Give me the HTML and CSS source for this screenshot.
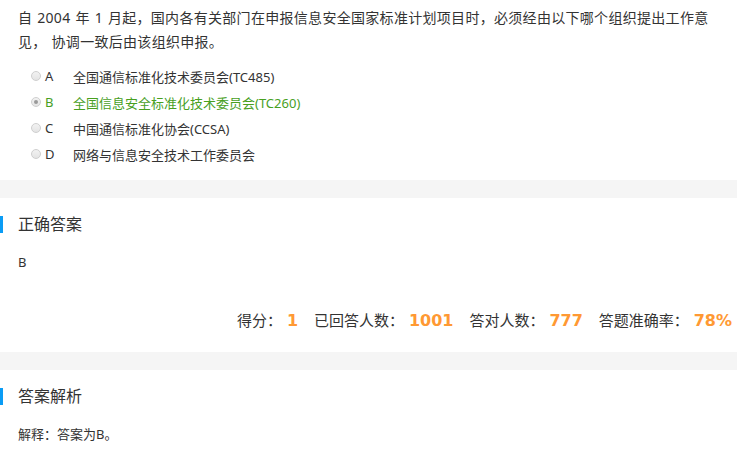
FILE: index.html
```html
<!DOCTYPE html>
<html lang="zh-CN">
<head>
    <meta charset="UTF-8">
    <title>题目详情</title>
    <link rel="stylesheet" href="styles.css">
</head>
<body>
    <div class="question-box">
        <p class="question">自 2004 年 1 月起，国内各有关部门在申报信息安全国家标准计划项目时，必须经由以下哪个组织提出工作意见， 协调一致后由该组织申报。</p>
        <ul class="choices">
            <li><span class="radio"></span><span class="letter">A</span>全国通信标准化技术委员会(TC485)</li>
            <li class="right"><span class="radio checked"></span><span class="letter">B</span>全国信息安全标准化技术委员会(TC260)</li>
            <li><span class="radio"></span><span class="letter">C</span>中国通信标准化协会(CCSA)</li>
            <li><span class="radio"></span><span class="letter">D</span>网络与信息安全技术工作委员会</li>
        </ul>
    </div>

    <div class="band"></div>

    <div class="section">
        <h2 class="section-title">正确答案</h2>
        <p class="section-text">B</p>
        <p class="stats">
            得分：<b>1</b>
            已回答人数：<b>1001</b>
            答对人数：<b>777</b>
            答题准确率：<b class="last">78%</b>
        </p>
    </div>

    <div class="band"></div>

    <div class="section">
        <h2 class="section-title">答案解析</h2>
        <p class="section-text">解释：答案为B。</p>
    </div>
</body>
</html>
```

FILE: styles.css
```css
body {
    margin: 0;
    font-family: "Noto Sans", "Noto Sans CJK SC", sans-serif;
    color: #333;
    background-color: #fff;
}

p, h2, ul {
    margin: 0;
}

.question {
    padding: 6px 18px 0 18px;
    font-size: 14px;
    line-height: 24px;
    letter-spacing: 0.3px;
    word-spacing: 1px;
}

.choices {
    list-style-type: none;
    padding: 0;
    margin: 9px 0 13px;
    font-size: 13px;
}

.choices li {
    display: flex;
    align-items: center;
    height: 26px;
}

.choices li.right {
    color: #48a01f;
}

.radio {
    box-sizing: border-box;
    width: 10px;
    height: 10px;
    margin-left: 31px;
    border: 1px solid #cfcfcf;
    border-radius: 50%;
    background: linear-gradient(#f2f2f2, #e4e4e4);
    display: flex;
    align-items: center;
    justify-content: center;
}

.radio.checked::after {
    content: "";
    width: 4px;
    height: 4px;
    border-radius: 50%;
    background-color: #9a9a9a;
}

.letter {
    width: 28px;
    margin-left: 4px;
}

.band {
    height: 18px;
    background-color: #f5f5f5;
}

.section-title {
    margin-top: 18px;
    border-left: 3px solid #0a9cf5;
    padding-left: 15px;
    font-size: 16px;
    font-weight: normal;
    line-height: 17px;
}

.section-text {
    margin-top: 19px;
    padding-left: 18px;
    font-size: 13px;
    line-height: 20px;
}

.stats {
    margin: 36px 0 19px;
    padding-right: 5px;
    text-align: right;
    font-size: 15px;
    line-height: 24px;
}

.stats b {
    font-family: "DejaVu Sans", sans-serif;
    font-size: 16px;
    color: #ff9933;
    margin: 0 12px 0 5px;
}

.stats b.last {
    margin-right: 0;
}
```
